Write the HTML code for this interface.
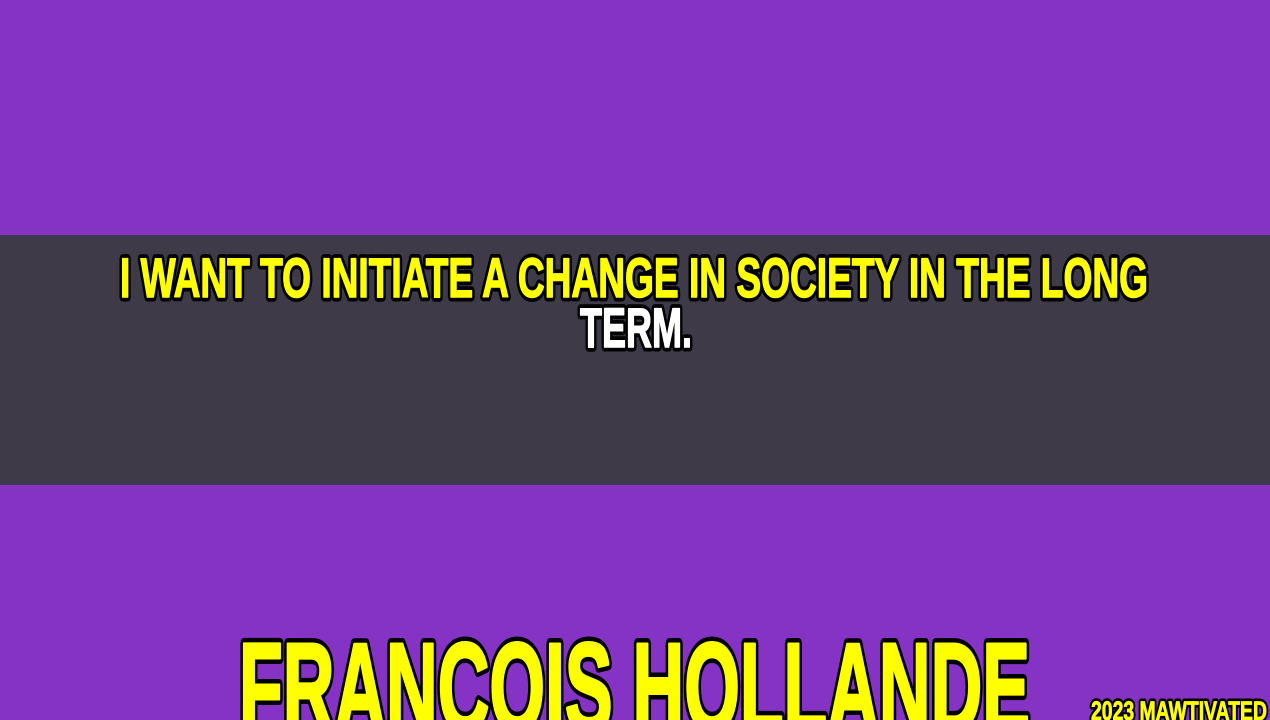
<!DOCTYPE html>
<html><head><style>html,body{margin:0;padding:0;background:#8533c4;overflow:hidden;width:1270px;height:720px}svg{display:block}</style></head>
<body>
<svg width="1270" height="720" xmlns="http://www.w3.org/2000/svg">
<rect width="1270" height="720" fill="#8533c4"/>
<rect y="235" width="1270" height="250" fill="#3e3a48"/>
<g font-family="'Liberation Sans Narrow','Liberation Sans',sans-serif" font-weight="bold" stroke-linejoin="round">
<g stroke="#000">
<text x="120" y="297" font-size="56" textLength="1028" lengthAdjust="spacingAndGlyphs" stroke-width="9">I WANT TO INITIATE A CHANGE IN SOCIETY IN THE LONG</text>
<text x="580" y="347" font-size="56" textLength="112" lengthAdjust="spacingAndGlyphs" stroke-width="9">TERM.</text>
<text x="239" y="731" font-size="126" textLength="791" lengthAdjust="spacingAndGlyphs" stroke-width="12">FRANCOIS HOLLANDE</text>
<text x="1091" y="720" font-size="27" textLength="176" lengthAdjust="spacingAndGlyphs" stroke-width="6">2023 MAWTIVATED</text>
</g>
<text x="120" y="297" font-size="56" textLength="1028" lengthAdjust="spacingAndGlyphs" fill="#ffff00" stroke="#ffff00" stroke-width="1.5">I WANT TO INITIATE A CHANGE IN SOCIETY IN THE LONG</text>
<text x="580" y="347" font-size="56" textLength="112" lengthAdjust="spacingAndGlyphs" fill="#fff" stroke="#fff" stroke-width="1.5">TERM.</text>
<text x="239" y="731" font-size="126" textLength="791" lengthAdjust="spacingAndGlyphs" fill="#ffff00" stroke="#ffff00" stroke-width="3">FRANCOIS HOLLANDE</text>
<text x="1091" y="720" font-size="27" textLength="176" lengthAdjust="spacingAndGlyphs" fill="#ffff00" stroke="#ffff00" stroke-width="0.8">2023 MAWTIVATED</text>
</g>
</svg>
</body></html>
